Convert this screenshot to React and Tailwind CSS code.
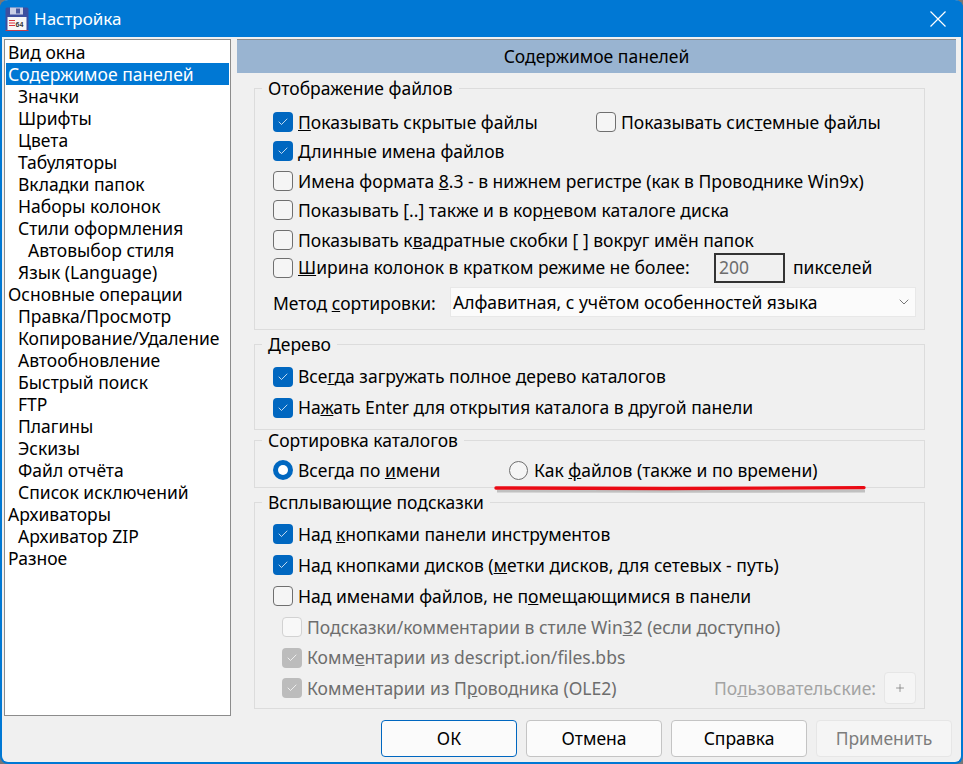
import { ChevronDown, Check, Plus } from 'lucide-react'

const treeItems = [
  ['Вид окна', 0],
  ['Содержимое панелей', 0, true],
  ['Значки', 1],
  ['Шрифты', 1],
  ['Цвета', 1],
  ['Табуляторы', 1],
  ['Вкладки папок', 1],
  ['Наборы колонок', 1],
  ['Стили оформления', 1],
  ['Автовыбор стиля', 2],
  ['Язык (Language)', 1],
  ['Основные операции', 0],
  ['Правка/Просмотр', 1],
  ['Копирование/Удаление', 1],
  ['Автообновление', 1],
  ['Быстрый поиск', 1],
  ['FTP', 1],
  ['Плагины', 1],
  ['Эскизы', 1],
  ['Файл отчёта', 1],
  ['Список исключений', 1],
  ['Архиваторы', 0],
  ['Архиватор ZIP', 1],
  ['Разное', 0],
]

const indent = ['pl-[2px]', 'pl-[12px]', 'pl-[22px]']

function FloppyIcon() {
  return (
    <svg width="24" height="24" viewBox="0 0 24 24" className="shrink-0">
      <rect x="0.5" y="0.5" width="23" height="23" rx="1.5" fill="#3d4f9f" />
      <rect x="5" y="0.5" width="13" height="7" fill="#c9cfe6" />
      <rect x="11" y="1.5" width="4" height="5" fill="#4a5a9f" />
      <rect x="2.5" y="10" width="19" height="13" fill="#f6f6f6" />
      <path d="M4 13.5h6M4 16h6M4 18.5h6" stroke="#d8333c" strokeWidth="1" />
      <text x="10.5" y="20" fontSize="7" fontWeight="700" fill="#333" fontFamily="Liberation Sans, sans-serif">64</text>
      <path d="M0.5 23.5h23" stroke="#c43d4a" strokeWidth="1" />
    </svg>
  )
}

function CheckBox({ checked, disabled }) {
  let box = 'border border-[#6f6f6f] bg-[#f5f5f5]'
  if (checked) box = disabled ? 'bg-[#bcbcbc]' : 'bg-[#0067c0]'
  else if (disabled) box = 'border border-[#d2d2d2] bg-[#f8f8f8]'
  return (
    <span className={`w-5 h-5 rounded-[4px] shrink-0 flex items-center justify-center ${box}`}>
      {checked && <Check size={12} strokeWidth={1.5} className="text-white" />}
    </span>
  )
}

function Radio({ checked }) {
  return checked ? (
    <span className="w-5 h-5 rounded-full bg-[#0067c0] shrink-0 flex items-center justify-center">
      <span className="w-[10px] h-[10px] rounded-full bg-white" />
    </span>
  ) : (
    <span className="w-[19px] h-[19px] rounded-full border border-[#6f6f6f] bg-[#f5f5f5] shrink-0" />
  )
}

function Row({ checked, disabled, sub, className = 'h-[29.5px]', children }) {
  return (
    <div className={`flex items-center gap-[5px] ${sub ? 'pl-[9px] text-[#6d6d6d]' : ''} ${className}`}>
      <CheckBox checked={checked} disabled={disabled} />
      <span className="whitespace-nowrap">{children}</span>
    </div>
  )
}

function Group({ title, className, children }) {
  return (
    <fieldset className={`border border-[#dcdcdc] ${className}`}>
      <legend className="ml-[7px] px-[6px] h-[22px] leading-[22px]">{title}</legend>
      {children}
    </fieldset>
  )
}

function Button({ primary, disabled, children }) {
  let style = 'bg-[#fbfbfb] border-[#c4c4c4] text-black'
  if (primary) style = 'bg-[#fbfbfb] border-[#0067c0] text-black'
  if (disabled) style = 'bg-[#f5f5f5] border-[#e6e6e6] text-[#7d7d7d]'
  return (
    <button className={`w-[136px] h-[37px] rounded-[4px] border ${style}`}>{children}</button>
  )
}

export default function App() {
  return (
    <div className="w-[963px] h-[764px] bg-[#777777] font-['Noto_Sans',sans-serif] text-[17.5px] text-black overflow-hidden">
      <div className="relative w-full h-full border-2 border-t-0 border-[#0078d4] rounded-[8px] bg-[#f0f0f0] flex flex-col">
        {/* Title bar */}
        <div className="h-[37px] -mx-[2px] bg-[#0078d4] rounded-t-[8px] flex items-center pl-[5px] pr-[17px] shrink-0 text-white">
          <FloppyIcon />
          <span className="ml-[5px] text-[17px]">Настройка</span>
          <svg width="16" height="16" viewBox="0 0 16 16" className="ml-auto" fill="none" stroke="#fff" strokeWidth="1.2">
            <path d="M0.5 0.5l15 15M15.5 0.5l-15 15" />
          </svg>
        </div>

        <div className="flex h-[679px] pt-[2px] pl-[2px] pr-[5px] shrink-0">
          {/* Tree */}
          <div className="w-[227px] border border-[#8c8c8c] bg-white pt-px px-px shrink-0">
            {treeItems.map(([label, level, selected]) => (
              <div
                key={label}
                className={`h-[22px] leading-[22px] whitespace-nowrap ${indent[level]} ${selected ? 'bg-[#0078d4] text-white' : ''}`}
              >
                {label}
              </div>
            ))}
          </div>

          {/* Page */}
          <div className="ml-[6px] flex-1 flex flex-col">
            <div className="h-[34px] bg-[#99b4d1] border-t border-[#8c8c8c] flex items-center justify-center shrink-0">
              Содержимое панелей
            </div>
            <div className="pl-[17px] pr-[31px]">
              <Group title="Отображение файлов" className="mt-[4px] h-[253px]">
                <div className="pl-[18px] pr-[8px] pt-[8px]">
                  <div className="flex h-[29.5px]">
                    <Row checked className="w-[323px] h-[29.5px]"><u>П</u>оказывать скрытые файлы</Row>
                    <Row>Показывать сис<u>т</u>емные файлы</Row>
                  </div>
                  <Row checked><u>Д</u>линные имена файлов</Row>
                  <Row>Имена формата <u>8</u>.3 - в нижнем регистре (как в Проводнике Win9x)</Row>
                  <Row>Показывать [..] также и в кор<u>н</u>евом каталоге диска</Row>
                  <Row>Показывать к<u>в</u>адратные скобки [ ] вокруг имён папок</Row>
                  <div className="flex items-center h-[26px]">
                    <Row className="h-[26px] w-[441px]"><u>Ш</u>ирина колонок в кратком режиме не более:</Row>
                    <div className="w-[71px] h-[30px] border-2 border-[#333333] text-[#6d6d6d] leading-[24px] pl-[3px]">200</div>
                    <span className="ml-[8px]">пикселей</span>
                  </div>
                  <div className="flex items-center mt-[6.5px]">
                    <span className="w-[177px] whitespace-nowrap pt-[3px]">Метод <u>с</u>ортировки:</span>
                    <div className="w-[466px] h-[30px] bg-[#fbfbfb] border border-[#e8e8e8] flex items-center justify-between pl-[2px] pr-[3px]">
                      <span className="pt-px">Алфавитная, с учётом особенностей языка</span>
                      <ChevronDown size={16} strokeWidth={1.2} className="text-[#555555]" />
                    </div>
                  </div>
                </div>
              </Group>

              <Group title="Дерево" className="mt-[3px] h-[97px]">
                <div className="pl-[18px] pt-[6px]">
                  <Row checked className="h-[31px]">Все<u>г</u>да загружать полное дерево каталогов</Row>
                  <Row checked className="h-[31px]">На<u>ж</u>ать Enter для открытия каталога в другой панели</Row>
                </div>
              </Group>

              <Group title="Сортировка каталогов" className="-mt-px h-[59px]">
                <div className="pl-[18px] flex items-center h-[30px] pt-[8px]">
                  <div className="w-[236px] flex items-center gap-[5px]">
                    <Radio checked />
                    <span>Всегда по <u>и</u>мени</span>
                  </div>
                  <div className="flex items-center gap-[6px]">
                    <Radio />
                    <span>Как <u>ф</u>айлов (также и по времени)</span>
                  </div>
                </div>
              </Group>

              <Group title="Всплывающие подсказки" className="mt-[3px] h-[218px]">
                <div className="pl-[18px] pr-[8px] pt-[6px]">
                  <Row checked className="h-[30.8px]">Над <u>к</u>нопками панели инструментов</Row>
                  <Row checked className="h-[30.8px]">Над кнопками дисков (<u>м</u>етки дисков, для сетевых - путь)</Row>
                  <Row className="h-[30.8px]">Над именами файлов, не п<u>о</u>мещающимися в панели</Row>
                  <Row sub disabled className="h-[30.8px]">Подсказки/комментарии в стиле Win<u>3</u>2 (если доступно)</Row>
                  <Row sub checked disabled className="h-[30.8px]">Комм<u>е</u>нтарии из descript.ion/files.bbs</Row>
                  <div className="flex items-center justify-between h-[30.8px]">
                    <Row sub checked disabled className="h-[30.8px]">Комментарии из П<u>р</u>оводника (OLE2)</Row>
                    <div className="flex items-center gap-[8px]">
                      <span className="text-[#a3a3a3]">По<u>л</u>ьзовательские:</span>
                      <span className="w-[32px] h-[32px] border border-[#e6e6e6] rounded-[4px] bg-[#f5f5f5] flex items-center justify-center">
                        <Plus size={12} strokeWidth={1.5} className="text-[#777777]" />
                      </span>
                    </div>
                  </div>
                </div>
              </Group>
            </div>
          </div>
        </div>

        {/* Footer buttons */}
        <div className="flex justify-end gap-[9px] pr-[9px] pt-[4px]">
          <Button primary>ОК</Button>
          <Button>Отмена</Button>
          <Button>Справка</Button>
          <Button disabled>Применить</Button>
        </div>

        {/* Red annotation line drawn on top of the screenshot */}
        <svg width="378" height="12" viewBox="0 0 378 12" className="absolute left-[490px] top-[484px]" fill="none">
          <path d="M4 5C120 5.5 260 5.5 372 5" stroke="#00000033" strokeWidth="3" transform="translate(1 2)" />
          <path d="M4 4C120 4.8 260 4.8 372 3.6" stroke="#ea0a14" strokeWidth="3.4" strokeLinecap="round" />
        </svg>
      </div>
    </div>
  )
}
